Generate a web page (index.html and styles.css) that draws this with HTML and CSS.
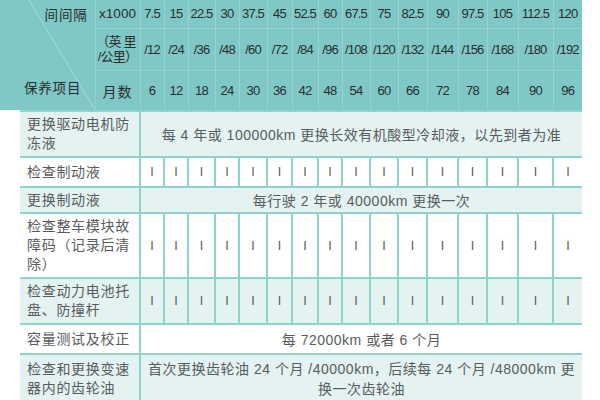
FILE: index.html
```html
<!DOCTYPE html>
<html lang="zh">
<head>
<meta charset="utf-8">
<link rel="stylesheet" href="styles.css">
</head>
<body>
<table class="sched">
  <colgroup>
    <col class="w-sp"><col class="w-l1"><col class="w-l2">
    <col class="w24"><col class="w24"><col class="w27"><col class="w24"><col class="w28"><col class="w25"><col class="w26"><col class="w24">
    <col class="w28"><col class="w28"><col class="w29"><col class="w31"><col class="w29"><col class="w31"><col class="w35"><col class="w29">
  </colgroup>
  <tbody>
    <tr class="h1">
      <td class="corner" colspan="2" rowspan="3">
        <div class="corner-in">
          <span class="c-top">间间隔</span>
          <span class="c-bot">保养项目</span>
        </div>
      </td>
      <td class="unit">x1000</td>
      <td class="num">7.5</td><td class="num">15</td><td class="num">22.5</td><td class="num">30</td><td class="num">37.5</td><td class="num">45</td><td class="num">52.5</td><td class="num">60</td>
      <td class="num">67.5</td><td class="num">75</td><td class="num">82.5</td><td class="num">90</td><td class="num">97.5</td><td class="num">105</td><td class="num">112.5</td><td class="num">120</td>
    </tr>
    <tr class="h2">
      <td class="unit unit-mi">（英 里<br>/公里）</td>
      <td class="num">/12</td><td class="num">/24</td><td class="num">/36</td><td class="num">/48</td><td class="num">/60</td><td class="num">/72</td><td class="num">/84</td><td class="num">/96</td>
      <td class="num">/108</td><td class="num">/120</td><td class="num">/132</td><td class="num">/144</td><td class="num">/156</td><td class="num">/168</td><td class="num">/180</td><td class="num">/192</td>
    </tr>
    <tr class="h3">
      <td class="unit unit-mo">月数</td>
      <td class="num">6</td><td class="num">12</td><td class="num">18</td><td class="num">24</td><td class="num">30</td><td class="num">36</td><td class="num">42</td><td class="num">48</td>
      <td class="num">54</td><td class="num">60</td><td class="num">66</td><td class="num">72</td><td class="num">78</td><td class="num">84</td><td class="num">90</td><td class="num">96</td>
    </tr>

    <tr class="row alt r46">
      <td class="sp"></td>
      <td class="label" colspan="2">更换驱动电机防冻液</td>
      <td class="span" colspan="16">每 4 年或 100000km 更换长效有机酸型冷却液，以先到者为准</td>
    </tr>
    <tr class="row r30">
      <td class="sp"></td>
      <td class="label" colspan="2">检查制动液</td>
      <td class="mk">I</td><td class="mk">I</td><td class="mk">I</td><td class="mk">I</td><td class="mk">I</td><td class="mk">I</td><td class="mk">I</td><td class="mk">I</td>
      <td class="mk">I</td><td class="mk">I</td><td class="mk">I</td><td class="mk">I</td><td class="mk">I</td><td class="mk">I</td><td class="mk">I</td><td class="mk">I</td>
    </tr>
    <tr class="row alt r26">
      <td class="sp"></td>
      <td class="label" colspan="2">更换制动液</td>
      <td class="span" colspan="16">每行驶 2 年或 40000km 更换一次</td>
    </tr>
    <tr class="row r65">
      <td class="sp"></td>
      <td class="label" colspan="2">检查整车模块故障码（记录后清除）</td>
      <td class="mk">I</td><td class="mk">I</td><td class="mk">I</td><td class="mk">I</td><td class="mk">I</td><td class="mk">I</td><td class="mk">I</td><td class="mk">I</td>
      <td class="mk">I</td><td class="mk">I</td><td class="mk">I</td><td class="mk">I</td><td class="mk">I</td><td class="mk">I</td><td class="mk">I</td><td class="mk">I</td>
    </tr>
    <tr class="row alt r46">
      <td class="sp"></td>
      <td class="label" colspan="2">检查动力电池托盘、防撞杆</td>
      <td class="mk">I</td><td class="mk">I</td><td class="mk">I</td><td class="mk">I</td><td class="mk">I</td><td class="mk">I</td><td class="mk">I</td><td class="mk">I</td>
      <td class="mk">I</td><td class="mk">I</td><td class="mk">I</td><td class="mk">I</td><td class="mk">I</td><td class="mk">I</td><td class="mk">I</td><td class="mk">I</td>
    </tr>
    <tr class="row r30">
      <td class="sp"></td>
      <td class="label" colspan="2">容量测试及校正</td>
      <td class="span" colspan="16">每 72000km 或者 6 个月</td>
    </tr>
    <tr class="row alt r48">
      <td class="sp"></td>
      <td class="label" colspan="2">检查和更换变速器内的齿轮油</td>
      <td class="span span-wrap" colspan="16">首次更换齿轮油 24 个月 /40000km，后续每 24 个月 /48000km 更换一次齿轮油</td>
    </tr>
  </tbody>
</table>
</body>
</html>
```

FILE: styles.css
```css
html, body {
  margin: 0;
  padding: 0;
  background: #ffffff;
}

body {
  width: 600px;
  height: 400px;
  overflow: hidden;
  font-family: "Liberation Sans", "Noto Sans CJK SC", sans-serif;
}

.sched {
  border-collapse: collapse;
  table-layout: fixed;
  width: 582px;
}

.w-sp { width: 20px; }
.w-l1 { width: 75px; }
.w-l2 { width: 45px; }
.w24 { width: 24px; }
.w25 { width: 25px; }
.w26 { width: 26px; }
.w27 { width: 27px; }
.w28 { width: 28px; }
.w29 { width: 29px; }
.w31 { width: 31px; }
.w35 { width: 35px; }

.sched td {
  padding: 0;
  text-align: center;
  vertical-align: middle;
  white-space: nowrap;
}

/* header */
.h1, .h2, .h3 {
  background: #7fc8c6;
  color: #2a2e2e;
}
.h1 { height: 28px; }
.h2 { height: 42px; }
.h3 { height: 40px; }

.h1 td.num, .h2 td.num, .h3 td.num, .unit {
  border-left: 1px solid rgba(255, 255, 255, 0.2);
}
.h2 td, .h3 td.num, .h3 td.unit {
  border-top: 1px solid rgba(255, 255, 255, 0.16);
}

.num {
  font-size: 13px;
  letter-spacing: -0.8px;
}

.unit {
  font-size: 13.5px;
  text-align: left;
  padding-left: 3px;
}
.unit-mi {
  font-size: 13px;
  line-height: 15px;
  letter-spacing: -0.8px;
  white-space: nowrap;
  padding-left: 0;
  text-indent: -3px;
}
.unit-mo {
  font-size: 14px;
  letter-spacing: 1px;
  text-align: center;
}

.corner {
  position: relative;
  vertical-align: top;
  padding: 0;
}
.corner-in {
  height: 110px;
  display: flex;
  flex-direction: column;
  justify-content: space-between;
  font-size: 13.5px;
  letter-spacing: 0.8px;
}
.corner::before {
  content: "";
  position: absolute;
  left: 29px;
  top: 0;
  width: 66px;
  height: 110px;
  background: linear-gradient(to top right,
    transparent calc(50% - 0.8px),
    rgba(255, 255, 255, 0.35) 50%,
    transparent calc(50% + 0.8px));
}
.c-top {
  align-self: flex-end;
  padding: 4px 7px 0 0;
}
.c-bot {
  align-self: flex-start;
  padding: 0 0 13px 24px;
}

/* body */
.row {
  background: #ffffff;
  color: #585c5c;
  font-size: 14px;
}
.row.alt {
  background: #e4f2f2;
}
.r26 { height: 26px; }
.r30 { height: 30px; }
.r46 { height: 46px; }
.r48 { height: 48px; }
.r65 { height: 65px; }

.row td {
  border-top: 2px solid #8fd3cd;
}
.row td.sp {
  background: #ffffff;
  border-top: none;
}

.label {
  text-align: left !important;
  white-space: normal !important;
  padding: 0 6px 0 7px !important;
  line-height: 19px;
  letter-spacing: 0.7px;
  border-right: 2px solid #8fd3cd;
}

.mk {
  font-size: 12.5px;
  color: #555959;
  border-left: 2px solid #8fd3cd;
}

.span {
  letter-spacing: 0.5px;
}
.span-wrap {
  white-space: normal !important;
  line-height: 20px;
  padding: 0 5px !important;
}
```
